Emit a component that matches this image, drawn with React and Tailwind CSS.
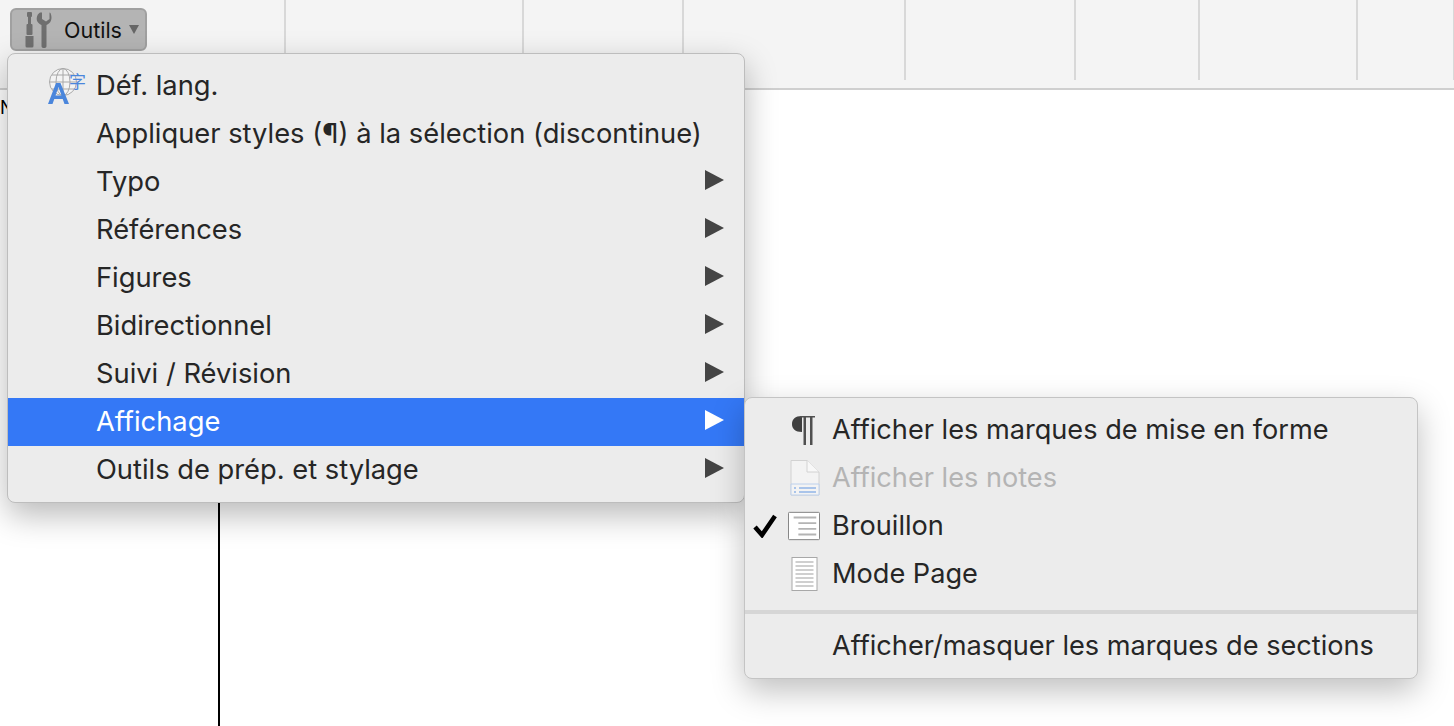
import React from "react";

const font = { fontFamily: "Inter, 'Liberation Sans', 'Noto Sans CJK SC', sans-serif" };

const mainItems = [
  { label: "Appliquer styles (¶) à la sélection (discontinue)" },
  { label: "Typo", arrow: true },
  { label: "Références", arrow: true },
  { label: "Figures", arrow: true },
  { label: "Bidirectionnel", arrow: true },
  { label: "Suivi / Révision", arrow: true },
  { label: "Affichage", arrow: true, active: true },
  { label: "Outils de prép. et stylage", arrow: true },
];

const columns = [
  "w-[238px]",
  "w-[160px]",
  "w-[222px]",
  "w-[170px]",
  "w-[124px]",
  "w-[158px]",
  "w-[97px]",
];

function Arrow({ active }) {
  return (
    <svg width="19" height="20" viewBox="0 0 19 20" className="shrink-0 mb-1">
      <polygon points="0,0 19,10 0,20" fill={active ? "#ffffff" : "#444444"} />
    </svg>
  );
}

function ToolsIcon() {
  return (
    <svg width="29" height="36" viewBox="0 0 29 36" fill="#6f6f6f" className="shrink-0">
      <rect x="3" y="0" width="5" height="5" rx="1" />
      <rect x="4" y="5" width="3" height="8" />
      <rect x="2.500" y="12" width="6" height="11" rx="1" />
      <path d="M1.500 24h8v10a1.500 1.500 0 0 1-1.500 1.500H3A1.500 1.500 0 0 1 1.500 34z" />
      <path d="M16 0.500c-3.500 2-4.500 7.500-1.500 10.500 1 1 2 1.500 3 2v21c0 1.500 1 2 2.500 2s2.500-.5 2.500-2v-21c4-1.500 6.500-6 4-12l-1-.5v6.500l-3.500 2.500-4-2.500V.5z" />
    </svg>
  );
}

function LangIcon() {
  return (
    <svg width="38" height="36" viewBox="0 0 38 36" className="shrink-0">
      <circle cx="15" cy="14" r="13.500" fill="#f4f4f4" stroke="#a8a8a8" />
      <ellipse cx="15" cy="14" rx="7" ry="13.500" fill="none" stroke="#a8a8a8" />
      <path d="M15 1v27M2 14h27M4 7h22M4 21h22" stroke="#a8a8a8" fill="none" />
      <path d="M0 36 8 15h4.500L21 36h-4.500l-1.800-5H6.300l-1.800 5zM7.500 27.500h6L10.500 19z" fill="#4a86dc" />
      <text x="21" y="20" fontSize="17" fill="#4a86dc" style={{ fontFamily: "'Noto Sans CJK SC', sans-serif" }}>
        字
      </text>
    </svg>
  );
}

function PilcrowIcon() {
  return (
    <svg width="24" height="30" viewBox="0 0 24 30">
      <path d="M11 1C4 1 1 4.500 1 9s3 8 10 8V1z" fill="#404040" />
      <path d="M9 1h15v1.500H9zM12.500 1h2.500v29h-2.500zM19 1h2.500v29H19z" fill="#505050" />
    </svg>
  );
}

function NotesIcon() {
  return (
    <svg width="30" height="36" viewBox="0 0 30 36" className="ml-1">
      <path d="M1 .5h16L29 12v23H1z" fill="#f3f3f3" stroke="#d2d2d2" />
      <path d="M17 .5V12h12" fill="#f8f8f8" stroke="#d2d2d2" />
      <path d="M1 24h28v11H1z" fill="#f3f3f3" stroke="#bcd0ec" />
      <path d="M4 28h2M9 28h17M4 32h2M9 32h17" stroke="#a9c4ea" strokeWidth="2" />
    </svg>
  );
}

function DraftIcon() {
  return (
    <svg width="34" height="30" viewBox="0 0 34 30" className="ml-0.5">
      <rect x=".5" y=".5" width="33" height="29" rx="1" fill="#ffffff" stroke="#7c7c7c" />
      <path d="M6 6h24M11 12h19M11 18h19M11 24h19" stroke="#b4b4b4" strokeWidth="2" />
    </svg>
  );
}

function PageIcon() {
  return (
    <svg width="27" height="34" viewBox="0 0 26 34" className="ml-0.5">
      <rect x=".5" y=".5" width="25" height="33" fill="#ffffff" stroke="#a8a8a8" />
      <path d="M4 5h18M4 9h18M4 13h18M4 17h18M4 21h18M4 25h18M4 29h18" stroke="#c0c0c0" strokeWidth="1.500" />
    </svg>
  );
}

function SubRow({ icon, label, disabled, checked }) {
  return (
    <div className="h-12 flex items-center">
      <div className="w-[87px] shrink-0 flex items-center">
        <div className="w-[41px] shrink-0 flex justify-start pl-2">
          {checked && (
            <svg width="25" height="24" viewBox="0 0 25 24">
              <path d="M2 13 9 21 22 2" fill="none" stroke="#000000" strokeWidth="4.500" />
            </svg>
          )}
        </div>
        <div className="w-[34px] shrink-0 flex justify-center">{icon}</div>
      </div>
      <span className={disabled ? "text-[#b4b4b4]" : "text-[#262626]"}>{label}</span>
    </div>
  );
}

export default function App() {
  return (
    <div className="relative h-[726px] w-[1454px] overflow-hidden bg-white flex flex-col" style={font}>
      {/* barre d'outils */}
      <div className="h-[90px] shrink-0 bg-[#f4f4f4] border-b-2 border-[#cfcfcf] flex items-start">
        <div className="w-[286px] h-20 shrink-0 border-r-2 border-[#d8d8d8] pt-2 pl-2.5">
          <div className="w-[137px] h-[43px] rounded-md bg-[#b4b4b4] border-2 border-[#a0a0a0] flex items-center pl-3">
            <ToolsIcon />
            <span className="ml-[11px] mt-0.5 text-[21.5px] text-[#111111]">Outils</span>
            <svg width="10" height="9" viewBox="0 0 10 9" className="ml-[7px] shrink-0">
              <polygon points="0,0 10,0 5,9" fill="#666666" />
            </svg>
          </div>
        </div>
        {columns.map((w) => (
          <div key={w} className={`${w} h-20 shrink-0 border-r-2 border-[#d8d8d8]`} />
        ))}
      </div>

      {/* document */}
      <div className="flex-1 pl-[218px] relative">
        <div className="w-0.5 h-full bg-black" />
        <span className="absolute left-0 top-[9px] text-[18px] leading-none text-black">N</span>
      </div>

      {/* menu Outils */}
      <div className="absolute left-[7px] top-[53px] w-[738px] h-[450px] py-2 rounded-lg bg-[#ececec] border border-[#bdbdbd] shadow-[0_12px_32px_rgba(0,0,0,0.28)] text-[27.3px]">
        <div className="h-12 flex items-center pl-10">
          <LangIcon />
          <span className="ml-[10px] text-[#262626]">Déf. lang.</span>
        </div>
        {mainItems.map((item) => (
          <div
            key={item.label}
            className={`h-12 flex items-center justify-between pl-[88px] pr-[20px] ${
              item.active ? "bg-[#3478f6] text-white" : "text-[#262626]"
            }`}
          >
            <span>{item.label}</span>
            {item.arrow && <Arrow active={item.active} />}
          </div>
        ))}
      </div>

      {/* sous-menu Affichage */}
      <div className="absolute left-[744px] top-[397px] w-[674px] h-[282px] py-2 rounded-lg bg-[#ececec] border border-[#c4c4c4] shadow-[0_12px_32px_rgba(0,0,0,0.25)] text-[27.15px]">
        <SubRow icon={<PilcrowIcon />} label="Afficher les marques de mise en forme" />
        <SubRow icon={<NotesIcon />} label="Afficher les notes" disabled />
        <SubRow icon={<DraftIcon />} label="Brouillon" checked />
        <SubRow icon={<PageIcon />} label="Mode Page" />
        <div className="h-6 pt-3">
          <div className="w-full h-1 bg-[#d6d6d6]" />
        </div>
        <SubRow label="Afficher/masquer les marques de sections" />
      </div>
    </div>
  );
}
